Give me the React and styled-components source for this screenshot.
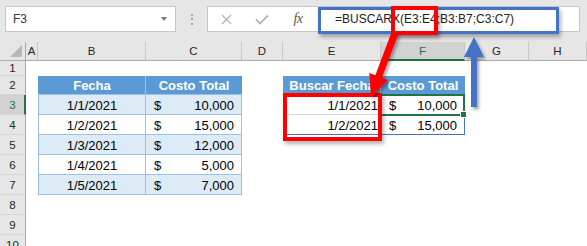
import React from 'react';
import styled, { createGlobalStyle } from 'styled-components';

const GlobalStyle = createGlobalStyle`
  html, body { margin: 0; padding: 0; background: #fff; }
  body { width: 587px; height: 246px; overflow: hidden; }
`;

const COLS = '26px 12px 108px 96px 41px 98px 84px 64px 1fr';
const LB = '#9bc2e6';
const HB = '#5b9bd5';
const BAND = '#ddebf7';
const DB = '#4472c4';
const GREEN = '#217346';

const Frame = styled.div`
  position: relative;
  width: 587px;
  height: 246px;
  overflow: hidden;
  background: #fff;
  font-family: "Liberation Sans", Arial, sans-serif;
`;

const TopBar = styled.div`
  display: flex;
  align-items: flex-start;
  height: 42px;
  box-sizing: border-box;
  padding: 6px 7px 0 5px;
  background: #e6e6e6;
`;

const NameBox = styled.div`
  width: 171px;
  height: 26px;
  box-sizing: border-box;
  border: 1px solid #c6c6c6;
  background: #fff;
  display: flex;
  align-items: center;
  justify-content: space-between;
  padding: 0 8px 0 7px;
  font-size: 12px;
  color: #333;
`;

const Caret = styled.span`
  width: 0;
  height: 0;
  border-left: 3.5px solid transparent;
  border-right: 3.5px solid transparent;
  border-top: 4px solid #7a7a7a;
`;

const Grip = styled.div`
  width: 31px;
  height: 26px;
  display: flex;
  flex-direction: column;
  align-items: center;
  justify-content: center;
  gap: 2.5px;
`;

const GripDot = styled.span`
  width: 2px;
  height: 2px;
  background: #a6a6a6;
`;

const FormulaBox = styled.div`
  flex: 1;
  height: 26px;
  box-sizing: border-box;
  border: 1px solid #c6c6c6;
  background: #fff;
  display: flex;
  align-items: center;
`;

const IconSlot = styled.div`
  width: 36px;
  height: 24px;
  display: flex;
  align-items: center;
  justify-content: center;
`;

const FxText = styled.span`
  font-family: "Liberation Serif", "Times New Roman", serif;
  font-style: italic;
  font-size: 14px;
  color: #555;
  letter-spacing: -0.5px;
`;

const FormulaText = styled.span`
  margin-left: 19px;
  font-size: 12px;
  color: #222;
  white-space: nowrap;
`;

const Sheet = styled.div`
  display: flex;
  flex-direction: column;
`;

const Row = styled.div`
  display: grid;
  grid-template-columns: ${COLS};
  height: ${p => p.$h}px;
`;

const Corner = styled.div`
  position: relative;
  background: #e6e6e6;
  box-sizing: border-box;
  border-right: 1px solid #ababab;
  border-bottom: 1px solid #ababab;
  &::after {
    content: '';
    position: absolute;
    right: 3px;
    bottom: 3px;
    width: 0;
    height: 0;
    border-left: 12px solid transparent;
    border-bottom: 12px solid #b8b8b8;
  }
`;

const ColHead = styled.div`
  background: ${p => (p.$sel ? '#d2d2d2' : '#e6e6e6')};
  color: ${p => (p.$sel ? GREEN : '#262626')};
  box-sizing: border-box;
  border-right: 1px solid #c8c8c8;
  border-bottom: ${p => (p.$sel ? `2px solid ${GREEN}` : '1px solid #ababab')};
  display: flex;
  align-items: center;
  justify-content: center;
  font-size: 11.5px;
  padding-top: ${p => (p.$sel ? 1 : 0)}px;
`;

const RowHead = styled.div`
  background: ${p => (p.$sel ? '#d2d2d2' : '#e6e6e6')};
  color: ${p => (p.$sel ? GREEN : '#262626')};
  box-sizing: border-box;
  border-right: ${p => (p.$sel ? `2px solid ${GREEN}` : '1px solid #ababab')};
  border-bottom: 1px solid #d6d6d6;
  display: flex;
  align-items: center;
  justify-content: center;
  font-size: 11.5px;
  padding-left: ${p => (p.$sel ? 1 : 0)}px;
`;

const justify = a =>
  a === 'right' ? 'flex-end' : a === 'left' ? 'flex-start' : a === 'between' ? 'space-between' : 'center';

const Cell = styled.div`
  position: relative;
  box-sizing: border-box;
  display: flex;
  align-items: center;
  justify-content: ${p => justify(p.$align)};
  padding: 0 ${p => (p.$pad ?? 3)}px;
  background: ${p => p.$bg || 'transparent'};
  color: ${p => (p.$head ? '#fff' : '#000')};
  font-weight: ${p => (p.$head ? 700 : 400)};
  font-size: 13px;
  white-space: nowrap;
  box-shadow: ${p =>
    [
      p.$bT && `inset 0 1px 0 ${p.$bT}`,
      p.$bB && `inset 0 -1px 0 ${p.$bB}`,
      p.$bL && `inset 1px 0 0 ${p.$bL}`,
      p.$bR && `inset -1px 0 0 ${p.$bR}`,
    ]
      .filter(Boolean)
      .join(', ') || 'none'};
`;

const Selection = styled.div`
  position: absolute;
  left: -1px;
  top: -1px;
  right: 0;
  bottom: -1px;
  border: 2px solid ${GREEN};
  z-index: 2;
  pointer-events: none;
`;

const FillHandle = styled.div`
  position: absolute;
  right: -4px;
  bottom: -4px;
  width: 5px;
  height: 5px;
  background: ${GREEN};
  border: 1px solid #fff;
`;

const ArgHighlight = styled.div`
  position: absolute;
  left: 391px;
  top: 6px;
  width: 47px;
  height: 29px;
  box-sizing: border-box;
  border: 4px solid #ff0000;
  box-shadow: 2px 3px 4px rgba(0, 0, 0, 0.3);
  z-index: 5;
`;

const FormulaHighlight = styled.div`
  position: absolute;
  left: 318px;
  top: 7px;
  width: 241px;
  height: 27px;
  box-sizing: border-box;
  border: 3px solid ${DB};
  box-shadow: 2px 3px 4px rgba(0, 0, 0, 0.3);
  z-index: 4;
`;

const LookupHighlight = styled.div`
  position: absolute;
  left: 283px;
  top: 93px;
  width: 99px;
  height: 48px;
  box-sizing: border-box;
  border: 4px solid #ff0000;
  box-shadow: 2px 3px 4px rgba(0, 0, 0, 0.3);
  z-index: 5;
`;

const ArrowLayer = styled.svg`
  position: absolute;
  left: 0;
  top: 0;
  width: 587px;
  height: 246px;
  z-index: 6;
  pointer-events: none;
`;

const Money = ({ v }) => (
  <>
    <span>$</span>
    <span>{v}</span>
  </>
);

const data = [
  ['1/1/2021', '10,000'],
  ['1/2/2021', '15,000'],
  ['1/3/2021', '12,000'],
  ['1/4/2021', '5,000'],
  ['1/5/2021', '7,000'],
];

const lookup = [
  ['1/1/2021', '10,000'],
  ['1/2/2021', '15,000'],
];

export default function App() {
  return (
    <Frame>
      <GlobalStyle />
      <TopBar>
        <NameBox>
          <span>F3</span>
          <Caret />
        </NameBox>
        <Grip>
          <GripDot />
          <GripDot />
          <GripDot />
        </Grip>
        <FormulaBox>
          <IconSlot>
            <svg width="11" height="11" viewBox="0 0 11 11">
              <path d="M1 1 L10 10 M10 1 L1 10" stroke="#b4b4b4" strokeWidth="1.3" fill="none" />
            </svg>
          </IconSlot>
          <IconSlot>
            <svg width="14" height="11" viewBox="0 0 14 11">
              <path d="M1 5.5 L5 9.5 L13 1.5" stroke="#b4b4b4" strokeWidth="1.8" fill="none" />
            </svg>
          </IconSlot>
          <IconSlot>
            <FxText>fx</FxText>
          </IconSlot>
          <FormulaText>=BUSCARX(E3:E4;B3:B7;C3:C7)</FormulaText>
        </FormulaBox>
      </TopBar>

      <Sheet>
        <Row $h={19}>
          <Corner />
          {['A', 'B', 'C', 'D', 'E', 'F', 'G', 'H'].map(c => (
            <ColHead key={c} $sel={c === 'F'}>{c}</ColHead>
          ))}
        </Row>

        <Row $h={15}>
          <RowHead>1</RowHead>
        </Row>

        <Row $h={19}>
          <RowHead>2</RowHead>
          <Cell />
          <Cell $head $bg={HB} $bR={LB} $bB={LB}>Fecha</Cell>
          <Cell $head $bg={HB} $bB={LB}>Costo Total</Cell>
          <Cell />
          <Cell $head $bg={HB} $bR={LB} $bB={LB}>Buscar Fecha</Cell>
          <Cell $head $bg={HB} $bB={LB}>Costo Total</Cell>
        </Row>

        {data.map(([d, v], i) => {
          const band = i % 2 === 0 ? BAND : '#fff';
          const lk = lookup[i];
          return (
            <Row key={d} $h={20}>
              <RowHead $sel={i === 0}>{i + 3}</RowHead>
              <Cell />
              <Cell $bg={band} $bL={LB} $bR={LB} $bB={LB}>{d}</Cell>
              <Cell $bg={band} $bR={LB} $bB={LB} $align="between" $pad={8}>
                <Money v={v} />
              </Cell>
              <Cell />
              {lk ? (
                <Cell $align="right" $bL={LB} $bB={i === 1 ? DB : '#c9d9ee'}>{lk[0]}</Cell>
              ) : (
                <Cell />
              )}
              {lk ? (
                <Cell $align="between" $pad={8} $bR={DB} $bB={i === 1 ? DB : '#c9d9ee'}>
                  <Money v={lk[1]} />
                  {i === 0 && (
                    <Selection>
                      <FillHandle />
                    </Selection>
                  )}
                </Cell>
              ) : (
                <Cell />
              )}
            </Row>
          );
        })}

        {[8, 9, 10].map(n => (
          <Row key={n} $h={20}>
            <RowHead>{n}</RowHead>
          </Row>
        ))}
      </Sheet>

      <FormulaHighlight />
      <ArgHighlight />
      <LookupHighlight />

      <ArrowLayer viewBox="0 0 587 246">
        <defs>
          <filter id="shadow" x="-50%" y="-50%" width="200%" height="200%">
            <feDropShadow dx="2" dy="2.5" stdDeviation="1.8" floodColor="#000" floodOpacity="0.35" />
          </filter>
        </defs>
        <polygon
          points="398.3,34.2 382,77.6 388.1,79.9 371,97 369.3,72.9 375.4,75.2 391.7,31.8"
          fill="#ff0000"
          filter="url(#shadow)"
        />
        <polygon
          points="474,37 484,57 477,57 477,107 471,107 471,57 464,57"
          fill={DB}
          filter="url(#shadow)"
        />
      </ArrowLayer>
    </Frame>
  );
}
